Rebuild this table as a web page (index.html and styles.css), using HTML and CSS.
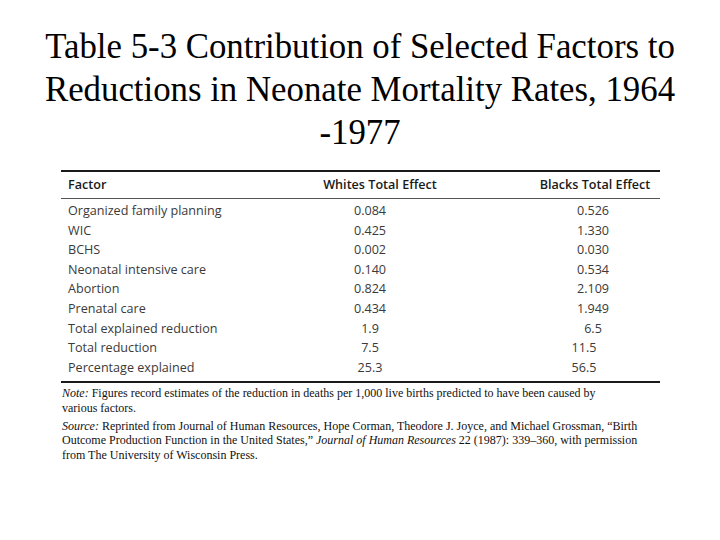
FILE: index.html
```html
<!DOCTYPE html>
<html>
<head>
<meta charset="utf-8">
<link rel="stylesheet" href="styles.css">
</head>
<body>
<h1 class="title">Table 5-3 Contribution of Selected Factors to<br>Reductions in Neonate Mortality Rates, 1964<br>-1977</h1>
<div class="figure">
  <div class="table">
    <div class="row head">
      <div class="c1">Factor</div>
      <div class="c2">Whites Total Effect</div>
      <div class="c3">Blacks Total Effect</div>
    </div>
    <div class="body">
      <div class="row"><div class="c1">Organized family planning</div><div class="c2">0.084</div><div class="c3">0.526</div></div>
      <div class="row"><div class="c1">WIC</div><div class="c2">0.425</div><div class="c3">1.330</div></div>
      <div class="row"><div class="c1">BCHS</div><div class="c2">0.002</div><div class="c3">0.030</div></div>
      <div class="row"><div class="c1">Neonatal intensive care</div><div class="c2">0.140</div><div class="c3">0.534</div></div>
      <div class="row"><div class="c1">Abortion</div><div class="c2">0.824</div><div class="c3">2.109</div></div>
      <div class="row"><div class="c1">Prenatal care</div><div class="c2">0.434</div><div class="c3">1.949</div></div>
      <div class="row"><div class="c1">Total explained reduction</div><div class="c2 short">1.9</div><div class="c3">6.5</div></div>
      <div class="row"><div class="c1">Total reduction</div><div class="c2 short">7.5</div><div class="c3 wide">11.5</div></div>
      <div class="row"><div class="c1">Percentage explained</div><div class="c2 short">25.3</div><div class="c3 wide">56.5</div></div>
    </div>
  </div>
  <p class="note"><i>Note:</i> Figures record estimates of the reduction in deaths per 1,000 live births predicted to have been caused by<br>various factors.</p>
  <p class="note"><i>Source:</i> Reprinted from Journal of Human Resources, Hope Corman, Theodore J. Joyce, and Michael Grossman, “Birth<br>Outcome Production Function in the United States,” <i>Journal of Human Resources</i> 22 (1987): 339–360, with permission<br>from The University of Wisconsin Press.</p>
</div>
</body>
</html>
```

FILE: styles.css
```css
html, body {
  margin: 0;
  padding: 0;
  background: #ffffff;
}

.title {
  margin: 0;
  padding-top: 25px;
  font-family: "Liberation Serif", "Times New Roman", serif;
  font-weight: normal;
  font-size: 34.8px;
  line-height: 43px;
  text-align: center;
  color: #000000;
}

.figure {
  width: 599px;
  margin: 16px 0 0 61px;
}

.table {
  border-top: 2px solid #1a1a1a;
  border-bottom: 2px solid #1a1a1a;
  font-family: "Open Sans", "Noto Sans", sans-serif;
  font-size: 12.6px;
  color: #3a3a3a;
}

.row {
  display: grid;
  grid-template-columns: 169px 160px 130px;
  column-gap: 70px;
  line-height: 19.6px;
}

.head {
  height: 26px;
  align-items: center;
  font-weight: 600;
  color: #1a1a1a;
  border-bottom: 1px solid #555555;
}

.body {
  padding: 2px 0 4px;
}

.c1 {
  padding-left: 7px;
  white-space: nowrap;
}

.c2, .c3 {
  text-align: center;
  white-space: nowrap;
}

.body .c2 {
  padding-right: 20px;
}

.body .c2.short {
  padding-right: 20px;
}

.body .c3 {
  padding-right: 4px;
}

.body .c3.wide {
  padding-right: 22px;
}

.note {
  margin: 3px 0 0 1px;
  font-family: "Liberation Serif", "Times New Roman", serif;
  font-size: 12px;
  line-height: 14.7px;
  color: #111111;
  white-space: nowrap;
}
```
